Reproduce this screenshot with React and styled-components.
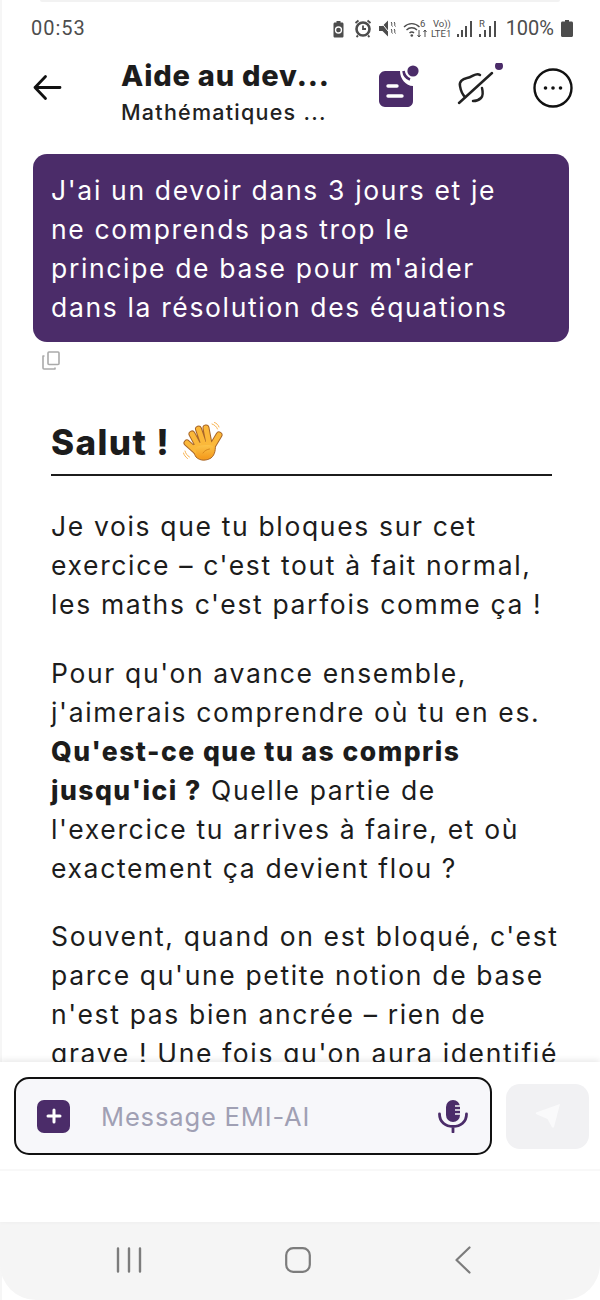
import React from 'react';
import styled, { createGlobalStyle } from 'styled-components';

const PURPLE = '#4b2c69';

const GlobalStyle = createGlobalStyle`
  html, body { margin: 0; padding: 0; background: #fff; }
  * { box-sizing: border-box; }
`;

const Phone = styled.div`
  width: 600px; height: 1300px; display: flex; flex-direction: column; overflow: hidden;
  background: #fff; font-family: "Inter", "Liberation Sans", sans-serif; color: #1c1c1c;
  box-shadow: inset 2px 0 0 #f6f6f6;
`;
const TopEdge = styled.div`
  height: 2px; flex: none; margin: 0 40px; background: #f2f2f2; border-radius: 0 0 2px 2px;
`;
const StatusBar = styled.div`
  height: 52px; flex: none; display: flex; align-items: center; justify-content: space-between;
  padding: 0 27px 0 31px; color: #4d4d4d; font-size: 20px; font-family: "Roboto", sans-serif;
`;
const Clock = styled.span`
  letter-spacing: 1px;
`;
const StatusIcons = styled.div`
  display: flex; align-items: center; gap: 7px;
`;
const Header = styled.div`
  height: 68px; flex: none; display: flex; align-items: center; padding: 0 26px 0 32px;
`;
const Titles = styled.div`
  width: 230px; margin-left: 59px; margin-right: 28px; padding-top: 8px;
`;
const Title = styled.div`
  font-size: 29px; line-height: 36px; font-weight: 800; letter-spacing: 0.8px; white-space: nowrap;
`;
const Subtitle = styled.div`
  margin-top: 3px; font-size: 21.5px; line-height: 30px; font-weight: 500; letter-spacing: 1.25px; white-space: nowrap; color: #222;
`;
const HeadActions = styled.div`
  display: flex; align-items: center; gap: 29px;
`;
const Scroll = styled.div`
  flex: 1; min-height: 0; overflow: hidden; padding: 32px 31px 0 33px;
`;
const Bubble = styled.div`
  background: ${PURPLE}; color: #fff; border-radius: 14px; padding: 17px 18px 15px;
  font-size: 26.5px; line-height: 39px; letter-spacing: 1.65px; white-space: nowrap;
`;
const CopyRow = styled.div`
  height: 26px; padding: 9px 0 0 9px; color: #aaa;
`;
const Answer = styled.div`
  padding: 52px 17px 0 18px;
`;
const Greeting = styled.h1`
  margin: 0; height: 56px; display: flex; align-items: center; gap: 13px; border-bottom: 2px solid #1c1c1c;
  font-size: 35px; line-height: 36px; font-weight: 800; letter-spacing: 1.4px; padding-bottom: 10px;
`;
const Para = styled.p`
  margin: 0 0 29.5px; font-size: 26.5px; line-height: 39px; letter-spacing: 1.65px; white-space: nowrap; color: #1c1c1c;
  &:first-of-type { margin-top: 31px; }
  b { font-weight: 800; letter-spacing: 1.48px; }
`;
const Composer = styled.div`
  height: 160px; flex: none; background: #fff; position: relative; display: flex; flex-direction: column;
  box-shadow: 0 -2px 6px rgba(0,0,0,0.09);
`;
const ComposerRow = styled.div`
  height: 109px; display: flex; align-items: center; gap: 14px; padding: 1px 11px 0 14px; border-bottom: 2px solid #f8f8f8;
`;
const InputBox = styled.div`
  width: 478px; flex: none; height: 78px; display: flex; align-items: center; border: 2px solid #111; border-radius: 15px;
  background: #f7f7fa; padding: 0 22px 0 21px;
`;
const PlusBtn = styled.div`
  width: 33px; height: 33px; border-radius: 7px; background: ${PURPLE}; display: flex; align-items: center; justify-content: center;
`;
const Placeholder = styled.div`
  flex: 1; margin-left: 31px; font-size: 25.5px; letter-spacing: 0.85px; color: #a0a0b4;
`;
const SendBtn = styled.div`
  width: 83px; height: 65px; flex: none; border-radius: 14px; background: #f1f1f3; display: flex; align-items: center; justify-content: center;
`;
const NavBar = styled.div`
  height: 78px; flex: none; background: #f5f5f5; border-radius: 0 0 36px 36px; display: flex; align-items: center;
  justify-content: space-between; padding: 0 128px 2px 116px; color: #7c7c7c;
`;

const Arrow = () => (
  <svg width="30" height="30" viewBox="0 0 30 30" fill="none" stroke="#111" strokeWidth="2.8" strokeLinecap="round" strokeLinejoin="round">
    <path d="M3 14.500h25M13.500 3.500 3 14.500l10.500 11" />
  </svg>
);

const NoteIcon = () => (
  <svg width="40" height="46" viewBox="0 0 40 46">
    <path fill={PURPLE} d="M6 6H21C21 14 27 21 34 21V36C34 40 31 42 28 42H6C3 42 0 39 0 36V12C0 9 3 6 6 6z" />
    <path d="M24.500 6C25 10 27 13 31 14.500" fill="none" stroke={PURPLE} strokeWidth="2.600" />
    <circle cx="34" cy="6" r="5.600" fill={PURPLE} />
    <path d="M9 21h9M9 31h14" stroke="#fff" strokeWidth="3.400" strokeLinecap="round" />
  </svg>
);

const MuteIcon = () => (
  <svg width="56" height="50" viewBox="-10 3 56 50" fill="none" stroke="#222" strokeWidth="2.500" strokeLinecap="round" strokeLinejoin="round">
    <path d="M22 15C18 12 15 17 9 18C4 19 1 22 2 26C2.500 29 3 33 7 37" />
    <path d="M24 28C25 32 25 36 23 38C21 40 18 41 15 41" />
    <path d="M1 43 34 13" />
    <circle cx="41" cy="6" r="4" fill={PURPLE} stroke="none" />
  </svg>
);

const MoreIcon = () => (
  <svg width="40" height="40" viewBox="0 0 40 40" fill="none">
    <circle cx="20" cy="20" r="18.500" stroke="#111" strokeWidth="2.400" />
    <circle cx="12.500" cy="20" r="1.800" fill="#111" />
    <circle cx="20" cy="20" r="1.800" fill="#111" />
    <circle cx="27.500" cy="20" r="1.800" fill="#111" />
  </svg>
);

const CopyIcon = () => (
  <svg width="18" height="19" viewBox="0 0 18 19" fill="none" stroke="#aaa" strokeWidth="1.600" strokeLinejoin="round">
    <rect x="6" y="1" width="11" height="12.500" rx="1" />
    <path d="M2.500 5H1v12c0 .6.400 1 1 1h11v-1.500" />
  </svg>
);

const Wave = () => (
  <svg width="40" height="40" viewBox="0 0 40 40" fill="none" strokeLinecap="round" strokeLinejoin="round">
    <defs>
      <linearGradient id="hand" x1="0" y1="0" x2="0" y2="1">
        <stop offset="0" stopColor="#fcc44a" />
        <stop offset="1" stopColor="#f49a1c" />
      </linearGradient>
    </defs>
    <path d="M29 2c2.500.800 4.500 2.500 5.500 5M31.500.500c2 .700 4 2.500 4.500 4.500M2 29c.700 2.500 2 4.500 4.500 6M.500 31c.500 2 2 4 4 5.500" stroke="#f6a93c" strokeWidth="0.900" />
    <g stroke="#a8662a" strokeWidth="7">
      <path d="M4 21l9 8M9 12l7 13M15.500 7l5.500 16M23 6l3 16M36 13l-6 10" />
    </g>
    <path d="M9 24c3-4 15-6 23-3 1 6 0 12-4 15-5 3-11 3-15-1-2-3-3-7-4-11z" fill="url(#hand)" stroke="#a8662a" strokeWidth="1" />
    <g stroke="#fbb83a" strokeWidth="5">
      <path d="M4 21l9 8M9 12l7 13M15.500 7l5.500 16M23 6l3 16M36 13l-6 10" />
    </g>
    <path d="M12 26c4-3 13-4 18-2 1 5 0 9-3 11-4 2-9 2-12-1-2-2-2-5-3-8z" fill="url(#hand)" />
    <path d="M20 31c1.500-2.500 4-3.500 6.500-4" stroke="#d98a1e" strokeWidth="1" />
  </svg>
);

// coordinates are screen x - 330, screen y - 14
const StatusGlyphs = () => (
  <svg width="170" height="24" viewBox="0 0 170 24" fill="#4d4d4d">
    <path d="M6 6.500h1.500V5h4v1.500H13c1 0 1.500.6 1.500 1.500v12c0 1-.5 1.500-1.500 1.500H6c-1 0-1.500-.5-1.500-1.500V8c0-.900.500-1.500 1.500-1.500z" />
    <circle cx="9.500" cy="14" r="3" fill="none" stroke="#fff" strokeWidth="1.300" />
    <circle cx="34" cy="13" r="6.500" fill="none" stroke="#4d4d4d" strokeWidth="2.600" />
    <path d="M34 9.500V13h3M26.500 7l3-2.500M41.500 7l-3-2.500M29 19.500 27.500 21M39 19.500l1.500 1.500" fill="none" stroke="#4d4d4d" strokeWidth="1.800" />
    <path d="M50 10h3.500l5.500-5.500v16L53.500 15H50z" />
    <path d="M51 5l12 15" stroke="#fff" strokeWidth="1" />
    <path d="M62 6c2 1.200-.5 3 1.500 4.500M62 13c2 1.200-.5 3 1.500 4.500M65 6c2 1.200-.5 3 1.500 4.500M65 13c2 1.200-.5 3 1.500 4.500" fill="none" stroke="#4d4d4d" strokeWidth="1" />
    <path d="M75 11c4.500-4.500 11-4.500 15.500 0M77.500 14c3-3 7.500-3 10.500 0M80.500 17c1.400-1.400 3.200-1.400 4.500 0" fill="none" stroke="#4d4d4d" strokeWidth="1.400" />
    <circle cx="82.800" cy="19.500" r="1.300" />
    <text x="91" y="11" fontSize="9.500" fontFamily="Roboto, sans-serif">6</text>
    <path d="M90 14v7M88.500 19l1.500 2 1.500-2M96 21v-7M94.500 16l1.500-2 1.500 2" fill="none" stroke="#4d4d4d" strokeWidth="1" />
    <text x="104" y="11" fontSize="9.500" fontFamily="Roboto, sans-serif">Vo))</text>
    <text x="102" y="21" fontSize="9.500" fontFamily="Roboto, sans-serif">LTE1</text>
    <rect x="128" y="18" width="2" height="3" /><rect x="132" y="14" width="2" height="7" />
    <rect x="136" y="10" width="2" height="11" /><rect x="141" y="5" width="2" height="16" />
    <text x="150" y="11" fontSize="9.500" fontFamily="Roboto, sans-serif">R</text>
    <rect x="150" y="18" width="2" height="3" /><rect x="155" y="14" width="2" height="7" />
    <rect x="160" y="10" width="2" height="11" /><rect x="165" y="5" width="2" height="16" />
  </svg>
);

const Battery = () => (
  <svg width="12" height="17" viewBox="0 0 12 17" fill="#4d4d4d">
    <path d="M4 0h4v1.500h2.500c.9 0 1.500.6 1.500 1.500v12.500c0 .9-.6 1.500-1.500 1.500h-9C.6 17 0 16.400 0 15.500V3c0-.9.600-1.500 1.500-1.500H4z" />
  </svg>
);

const Mic = () => (
  <svg width="30" height="34" viewBox="0 0 30 34" fill="none">
    <rect x="8" y="1" width="14" height="22" rx="7" fill={PURPLE} />
    <path d="M17 7h5M17 11h5M17 15h5" stroke="#f7f7fa" strokeWidth="1.400" />
    <path d="M1.500 15c0 8 6 12.500 13.500 12.500S28.500 23 28.500 15M15 27.500V33" stroke={PURPLE} strokeWidth="2.800" strokeLinecap="round" />
  </svg>
);

const Plane = () => (
  <svg width="26" height="26" viewBox="0 0 26 26" fill="#fafafb">
    <path d="M1 9.500 25 1 19 24c-.3 1-1.500 1-2 .3l-4.500-8.300L2 11.500c-1-.5-1.500-1.500-1-2z" />
  </svg>
);

const Recents = () => (
  <svg width="26" height="26" viewBox="0 0 26 26" fill="none" stroke="#7c7c7c" strokeWidth="2.400" strokeLinecap="round">
    <path d="M2 1.500v23M13 1.500v23M24 1.500v23" />
  </svg>
);
const Home = () => (
  <svg width="26" height="26" viewBox="0 0 26 26" fill="none" stroke="#7c7c7c" strokeWidth="2.200">
    <rect x="1.200" y="1.200" width="23.600" height="23.600" rx="7" />
  </svg>
);
const Back = () => (
  <svg width="18" height="28" viewBox="0 0 18 28" fill="none" stroke="#7c7c7c" strokeWidth="2.200" strokeLinecap="round" strokeLinejoin="round">
    <path d="M15.500 1.500 2.500 14l13 12.500" />
  </svg>
);

export default function App() {
  return (
    <Phone>
      <GlobalStyle />
      <TopEdge />
      <StatusBar>
        <Clock>00:53</Clock>
        <StatusIcons>
          <StatusGlyphs />
          <span>100%</span>
          <Battery />
        </StatusIcons>
      </StatusBar>
      <Header>
        <Arrow />
        <Titles>
          <Title>Aide au dev...</Title>
          <Subtitle>Mathématiques ...</Subtitle>
        </Titles>
        <HeadActions>
          <NoteIcon />
          <MuteIcon />
          <MoreIcon />
        </HeadActions>
      </Header>
      <Scroll>
        <Bubble>
          J'ai un devoir dans 3 jours et je<br />
          ne comprends pas trop le<br />
          principe de base pour m'aider<br />
          dans la résolution des équations
        </Bubble>
        <CopyRow><CopyIcon /></CopyRow>
        <Answer>
          <Greeting>Salut ! <Wave /></Greeting>
          <Para>
            Je vois que tu bloques sur cet<br />
            exercice – c'est tout à fait normal,<br />
            les maths c'est parfois comme ça !
          </Para>
          <Para>
            Pour qu'on avance ensemble,<br />
            j'aimerais comprendre où tu en es.<br />
            <b>Qu'est-ce que tu as compris</b><br />
            <b>jusqu'ici ?</b> Quelle partie de<br />
            l'exercice tu arrives à faire, et où<br />
            exactement ça devient flou ?
          </Para>
          <Para>
            Souvent, quand on est bloqué, c'est<br />
            parce qu'une petite notion de base<br />
            n'est pas bien ancrée – rien de<br />
            grave ! Une fois qu'on aura identifié
          </Para>
        </Answer>
      </Scroll>
      <Composer>
        <ComposerRow>
          <InputBox>
            <PlusBtn>
              <svg width="16" height="16" viewBox="0 0 16 16" stroke="#fff" strokeWidth="3" strokeLinecap="round"><path d="M8 2v12M2 8h12" /></svg>
            </PlusBtn>
            <Placeholder>Message EMI-AI</Placeholder>
            <Mic />
          </InputBox>
          <SendBtn><Plane /></SendBtn>
        </ComposerRow>
      </Composer>
      <NavBar>
        <Recents />
        <Home />
        <Back />
      </NavBar>
    </Phone>
  );
}
